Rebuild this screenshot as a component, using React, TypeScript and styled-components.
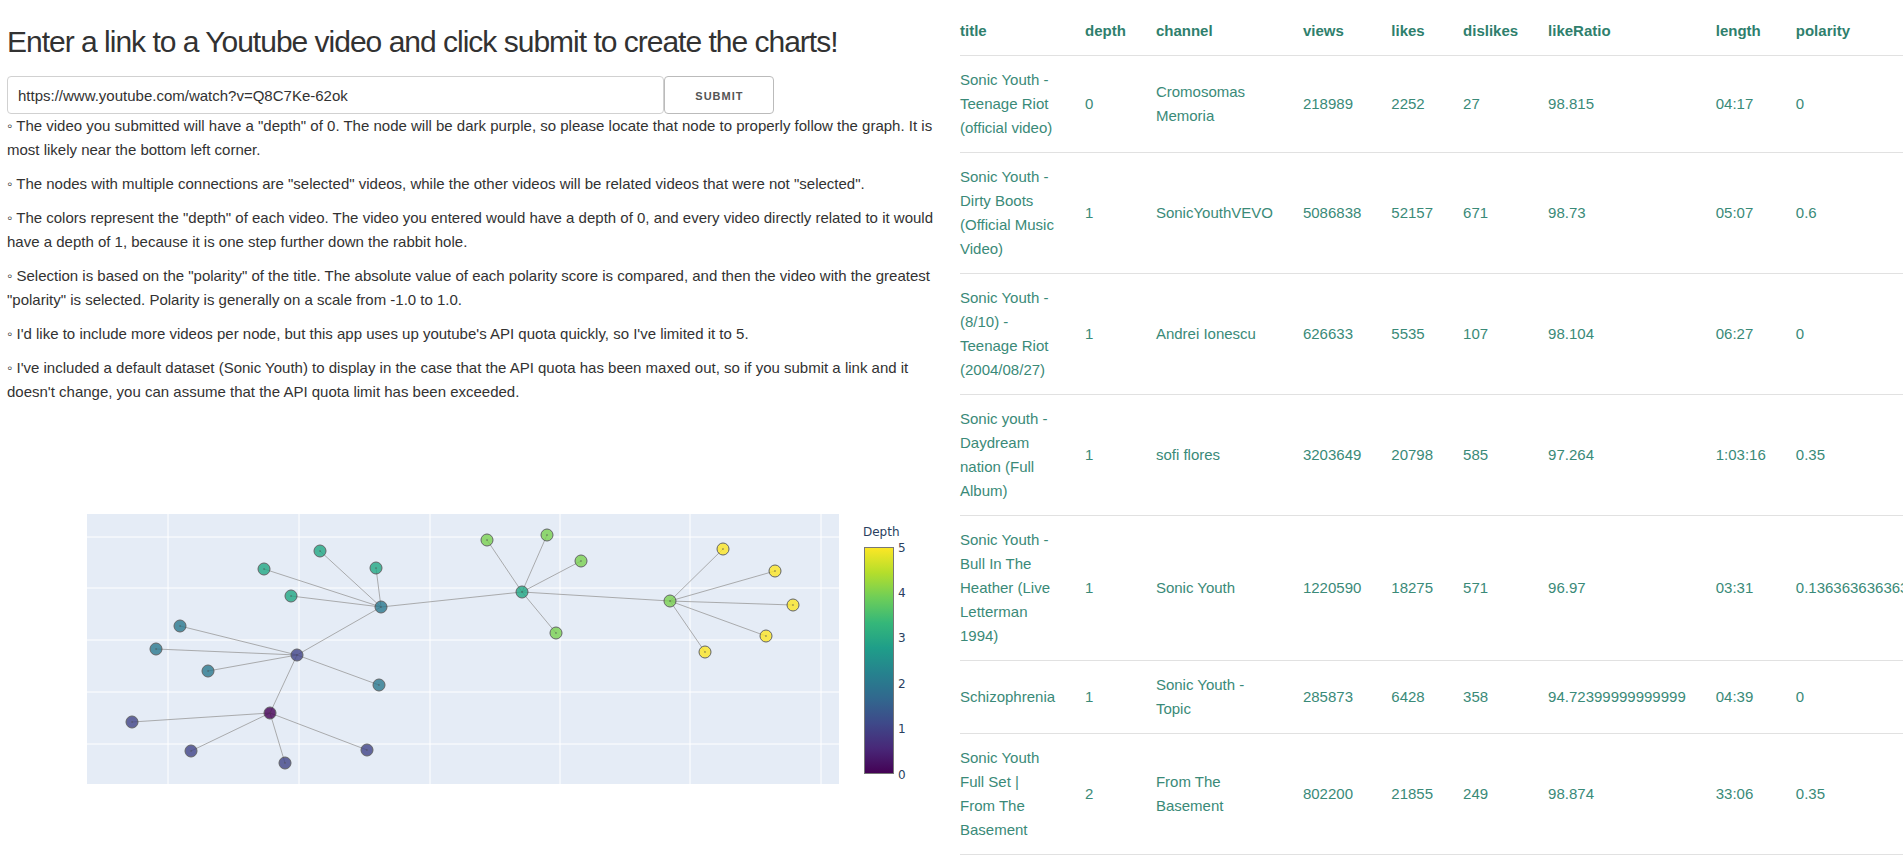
import React from 'react'
import styled, { createGlobalStyle } from 'styled-components'

const GlobalStyle = createGlobalStyle`
  html, body {
    margin: 0;
    padding: 0;
    overflow: hidden;
    background: #fff;
  }
  body {
    font-family: 'Liberation Sans', Arial, Helvetica, sans-serif;
    font-size: 15px;
    line-height: 1.6;
    color: #323232;
  }
`

const Page = styled.div`
  display: grid;
  grid-template-columns: 939px 1fr;
  column-gap: 14px;
  padding: 7px 0 0 7px;
  align-items: start;
`

const LeftColumn = styled.div`
  display: flex;
  flex-direction: column;
`

const Title = styled.h3`
  margin: 15px 0;
  font-size: 30px;
  font-weight: 400;
  line-height: 1.3;
  letter-spacing: -1px;
  color: #323232;
`

const UrlForm = styled.form`
  display: flex;
  height: 38px;
  margin: 0;
`

const UrlInput = styled.input`
  box-sizing: border-box;
  width: 70%;
  height: 38px;
  padding: 6px 10px;
  border: 1px solid #d1d1d1;
  border-radius: 4px;
  background: #fff;
  font-family: inherit;
  font-size: 15px;
  color: #323232;
  outline: none;
`

const SubmitButton = styled.button`
  box-sizing: border-box;
  height: 38px;
  padding: 0 30px;
  border: 1px solid #bbb;
  border-radius: 4px;
  background: transparent;
  font-family: inherit;
  font-size: 11px;
  font-weight: 700;
  letter-spacing: 1px;
  line-height: 38px;
  text-transform: uppercase;
  color: #555;
  cursor: pointer;
`

const Notes = styled.div`
  display: flex;
  flex-direction: column;
`

const Note = styled.p`
  margin: 0 0 10px;
  line-height: 24px;
`

const GraphFigure = styled.svg`
  display: block;
  font-family: 'DejaVu Sans', verdana, arial, sans-serif;
`

const RightColumn = styled.div`
  min-width: 0;
`

const DataTable = styled.table`
  width: 100%;
  border-collapse: collapse;
  border-spacing: 0;
  color: #3a8a78;
`

const HeadCell = styled.th`
  padding: 12px 15px;
  text-align: left;
  font-weight: 700;
  line-height: 24px;
  color: #2f7f6d;
  border-bottom: 1px solid #e1e1e1;
  &:first-child {
    padding-left: 0;
  }
  &:last-child {
    padding-right: 0;
  }
`

const Cell = styled.td`
  padding: 12px 15px;
  text-align: left;
  line-height: 24px;
  border-bottom: 1px solid #e1e1e1;
  &:first-child {
    padding-left: 0;
  }
  &:last-child {
    padding-right: 0;
  }
`

const notes = [
  '◦ The video you submitted will have a "depth" of 0. The node will be dark purple, so please locate that node to properly follow the graph. It is most likely near the bottom left corner.',
  '◦ The nodes with multiple connections are "selected" videos, while the other videos will be related videos that were not "selected".',
  '◦ The colors represent the "depth" of each video. The video you entered would have a depth of 0, and every video directly related to it would have a depth of 1, because it is one step further down the rabbit hole.',
  '◦ Selection is based on the "polarity" of the title. The absolute value of each polarity score is compared, and then the video with the greatest "polarity" is selected. Polarity is generally on a scale from -1.0 to 1.0.',
  "◦ I'd like to include more videos per node, but this app uses up youtube's API quota quickly, so I've limited it to 5.",
  "◦ I've included a default dataset (Sonic Youth) to display in the case that the API quota has been maxed out, so if you submit a link and it doesn't change, you can assume that the API quota limit has been exceeded.",
]

const columns = ['title', 'depth', 'channel', 'views', 'likes', 'dislikes', 'likeRatio', 'length', 'polarity']

const videos = [
  ['Sonic Youth - Teenage Riot (official video)', '0', 'Cromosomas Memoria', '218989', '2252', '27', '98.815', '04:17', '0'],
  ['Sonic Youth - Dirty Boots (Official Music Video)', '1', 'SonicYouthVEVO', '5086838', '52157', '671', '98.73', '05:07', '0.6'],
  ['Sonic Youth - (8/10) - Teenage Riot (2004/08/27)', '1', 'Andrei Ionescu', '626633', '5535', '107', '98.104', '06:27', '0'],
  ['Sonic youth - Daydream nation (Full Album)', '1', 'sofi flores', '3203649', '20798', '585', '97.264', '1:03:16', '0.35'],
  ['Sonic Youth - Bull In The Heather (Live Letterman 1994)', '1', 'Sonic Youth', '1220590', '18275', '571', '96.97', '03:31', '0.13636363636363635'],
  ['Schizophrenia', '1', 'Sonic Youth - Topic', '285873', '6428', '358', '94.72399999999999', '04:39', '0'],
  ['Sonic Youth Full Set | From The Basement', '2', 'From The Basement', '802200', '21855', '249', '98.874', '33:06', '0.35'],
]

// viridis, depth 0..5
const depthColors = ['#440154', '#414487', '#2a788e', '#22a884', '#7ad151', '#fde725']

// [x, y, depth] in page coordinates; hubs are the "selected" videos
const hubs: [number, number, number][] = [
  [270, 713, 0],
  [297, 655, 1],
  [381, 607, 2],
  [522, 592, 3],
  [670, 601, 4],
]

const leaves: [number, number][][] = [
  [[132, 722], [191, 751], [285, 763], [367, 750]],
  [[180, 626], [156, 649], [208, 671], [379, 685]],
  [[320, 551], [264, 569], [376, 568], [291, 596]],
  [[487, 540], [547, 535], [581, 561], [556, 633]],
  [[723, 549], [775, 571], [793, 605], [766, 636], [705, 652]],
]

const gridX = [168, 299, 430, 560, 690, 821]
const gridY = [537, 588, 640, 692, 744]

function NetworkGraph() {
  const edges: [number, number, number, number][] = []
  const nodes: [number, number, number][] = []
  hubs.forEach(([hx, hy, d], i) => {
    nodes.push([hx, hy, d])
    leaves[i].forEach(([lx, ly]) => {
      edges.push([hx, hy, lx, ly])
      nodes.push([lx, ly, d + 1])
    })
    if (i < hubs.length - 1) {
      edges.push([hx, hy, hubs[i + 1][0], hubs[i + 1][1]])
    }
  })

  const barTop = 547
  const barBottom = 774

  return (
    <GraphFigure width={939} height={450} viewBox='0 0 939 450'>
      <defs>
        <linearGradient id='viridis' x1='0' y1='1' x2='0' y2='0'>
          <stop offset='0' stopColor='#440154' />
          <stop offset='0.111' stopColor='#482878' />
          <stop offset='0.222' stopColor='#3e4989' />
          <stop offset='0.333' stopColor='#31688e' />
          <stop offset='0.444' stopColor='#26828e' />
          <stop offset='0.556' stopColor='#1f9e89' />
          <stop offset='0.667' stopColor='#35b779' />
          <stop offset='0.778' stopColor='#6ece58' />
          <stop offset='0.889' stopColor='#b5de2b' />
          <stop offset='1' stopColor='#fde725' />
        </linearGradient>
      </defs>
      <g transform='translate(-7 -414)'>
        <rect x={87} y={514} width={752} height={270} fill='#e5ecf6' />
        {gridX.map((x) => (
          <line key={'gx' + x} x1={x} y1={514} x2={x} y2={784} stroke='#fff' strokeWidth={1} />
        ))}
        {gridY.map((y) => (
          <line key={'gy' + y} x1={87} y1={y} x2={839} y2={y} stroke='#fff' strokeWidth={1} />
        ))}
        {edges.map(([x1, y1, x2, y2], i) => (
          <line key={'e' + i} x1={x1} y1={y1} x2={x2} y2={y2} stroke='#999' strokeWidth={0.8} />
        ))}
        {nodes.map(([x, y, d], i) => (
          <g key={'n' + i} opacity={0.8}>
            <circle cx={x} cy={y} r={6} fill={depthColors[d]} stroke='#444' strokeWidth={1} />
            <circle cx={x} cy={y} r={0.7} fill='#333' />
          </g>
        ))}
        <text x={863} y={536} fontSize={12} fill='#2a3f5f'>
          Depth
        </text>
        <rect x={864.5} y={barTop + 0.5} width={29} height={barBottom - barTop - 1} fill='url(#viridis)' stroke='#777' strokeWidth={1} />
        {[0, 1, 2, 3, 4, 5].map((t) => (
          <text key={'t' + t} x={898} y={barBottom - (t * (barBottom - barTop)) / 5 + 4.5} fontSize={12} fill='#2a3f5f'>
            {t}
          </text>
        ))}
      </g>
    </GraphFigure>
  )
}

function App() {
  return (
    <Page>
      <GlobalStyle />
      <LeftColumn>
        <Title>Enter a link to a Youtube video and click submit to create the charts!</Title>
        <UrlForm onSubmit={(e) => e.preventDefault()}>
          <UrlInput type='text' defaultValue='https://www.youtube.com/watch?v=Q8C7Ke-62ok' />
          <SubmitButton type='submit'>Submit</SubmitButton>
        </UrlForm>
        <Notes>
          {notes.map((n) => (
            <Note key={n}>{n}</Note>
          ))}
        </Notes>
        <NetworkGraph />
      </LeftColumn>
      <RightColumn>
        <DataTable>
          <thead>
            <tr>
              {columns.map((c) => (
                <HeadCell key={c}>{c}</HeadCell>
              ))}
            </tr>
          </thead>
          <tbody>
            {videos.map((row) => (
              <tr key={row[0]}>
                {row.map((v, i) => (
                  <Cell key={columns[i]}>{v}</Cell>
                ))}
              </tr>
            ))}
          </tbody>
        </DataTable>
      </RightColumn>
    </Page>
  )
}

export default App
